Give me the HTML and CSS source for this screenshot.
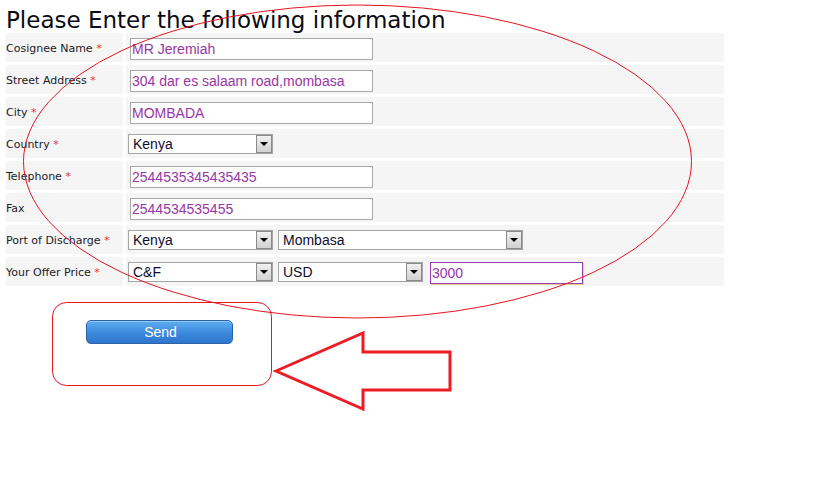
FILE: index.html
```html
<!DOCTYPE html>
<html lang="en">
<head>
    <meta charset="UTF-8" />
    <title>Shipping Request</title>
    <link rel="stylesheet" href="styles.css">
</head>
<body>

<div class="page">
    <h1 class="title">Please Enter the following information</h1>

    <table class="form-table">
        <tr>
            <td class="label">Cosignee Name <span class="req">*</span></td>
            <td class="field"><input type="text" class="text" value="MR Jeremiah"></td>
        </tr>
        <tr>
            <td class="label">Street Address <span class="req">*</span></td>
            <td class="field"><input type="text" class="text" value="304 dar es salaam road,mombasa"></td>
        </tr>
        <tr>
            <td class="label">City <span class="req">*</span></td>
            <td class="field"><input type="text" class="text" value="MOMBADA"></td>
        </tr>
        <tr>
            <td class="label">Country <span class="req">*</span></td>
            <td class="field">
                <span class="select"><select><option>Kenya</option></select></span>
            </td>
        </tr>
        <tr>
            <td class="label">Telephone <span class="req">*</span></td>
            <td class="field"><input type="text" class="text" value="2544535345435435"></td>
        </tr>
        <tr>
            <td class="label">Fax</td>
            <td class="field"><input type="text" class="text" value="2544534535455"></td>
        </tr>
        <tr>
            <td class="label">Port of Discharge <span class="req">*</span></td>
            <td class="field">
                <span class="select"><select><option>Kenya</option></select></span>
                <span class="select wide"><select><option>Mombasa</option></select></span>
            </td>
        </tr>
        <tr>
            <td class="label">Your Offer Price <span class="req">*</span></td>
            <td class="field">
                <span class="select"><select><option>C&amp;F</option></select></span>
                <span class="select"><select><option>USD</option></select></span>
                <input type="text" class="text price" value="3000">
            </td>
        </tr>
    </table>

    <div class="actions">
        <button class="send">Send</button>
    </div>
</div>

<!-- markup drawn on the screenshot -->
<svg class="marks" width="814" height="499" viewBox="0 0 814 499">
    <ellipse cx="357.5" cy="161.5" rx="334" ry="156.5" fill="none" stroke="#e8141e" stroke-width="1"/>
    <rect x="52.5" y="302.5" width="219" height="83" rx="14" fill="none" stroke="#e8141e" stroke-width="1"/>
    <polygon points="276,371 363,333 363,352 450,352 450,390 363,390 363,409" fill="none" stroke="#ed1c24" stroke-width="3"/>
</svg>

</body>
</html>
```

FILE: styles.css
```css
body {
    margin: 0;
    background: #fff;
    font-family: 'DejaVu Sans', Verdana, sans-serif;
    color: #1a1a2a;
}

.page {
    padding-left: 3px;
}

.title {
    margin: 11px 0 0 3px;
    line-height: 19px;
    font-size: 23px;
    font-weight: normal;
    color: #0a0a14;
}

.form-table {
    border-collapse: separate;
    border-spacing: 3px;
    width: 724px;
}

.form-table td {
    background: #f5f5f5;
    padding: 0;
    height: 29px;
    box-sizing: border-box;
}

.label {
    width: 117px;
    padding-top: 2px !important;
    font-size: 11px;
    vertical-align: middle;
    white-space: nowrap;
}

.req {
    color: #e8303a;
}

.field {
    padding: 5px 0 0 2px !important;
    vertical-align: top;
    font-size: 0;
}

.text {
    box-sizing: border-box;
    width: 243px;
    height: 22px;
    margin: 0 0 0 2px;
    padding: 0 1px;
    border: 1px solid #a9a9a9;
    background: #fff;
    font-family: 'Liberation Sans', Arial, sans-serif;
    font-size: 14px;
    color: #9a35a8;
    vertical-align: top;
}

.text.price {
    width: 153px;
    margin-left: 7px;
    border-color: #9b3fb8;
    box-shadow: 1px 1px 0 #e9d37c;
}

.select {
    display: inline-block;
    position: relative;
    width: 145px;
    height: 20px;
    vertical-align: top;
}

.select + .select {
    margin-left: 5px;
}

.select.wide {
    width: 245px;
}

.select select {
    box-sizing: border-box;
    width: 100%;
    height: 20px;
    margin: 0;
    padding: 0 0 0 4px;
    border: 1px solid #a5a5a5;
    border-radius: 0;
    background: #fff;
    appearance: none;
    -webkit-appearance: none;
    font-family: 'Liberation Sans', Arial, sans-serif;
    font-size: 14px;
    color: #0c0c30;
}

/* drop-down button */
.select::before {
    content: '';
    position: absolute;
    top: 1px;
    right: 1px;
    width: 14px;
    height: 16px;
    border: 1px solid #8a8a8a;
    background: linear-gradient(#f0f0f0, #d2d2d2);
    pointer-events: none;
}

.select::after {
    content: '';
    position: absolute;
    top: 8px;
    right: 5px;
    border-left: 4px solid transparent;
    border-right: 4px solid transparent;
    border-top: 4px solid #000;
    pointer-events: none;
}

.actions {
    padding: 31px 0 0 83px;
}

.send {
    width: 147px;
    height: 24px;
    padding: 0 0 0 2px;
    border: 1px solid #2c62a8;
    border-radius: 5px;
    background: linear-gradient(#5eaef0, #3a86da 60%, #2f76cc);
    box-shadow: inset 0 1px 0 rgba(255, 255, 255, 0.35), 0 1px 1px rgba(0, 0, 0, 0.15);
    font-family: 'Liberation Sans', Arial, sans-serif;
    font-size: 14px;
    color: #fff;
    cursor: pointer;
}

.marks {
    position: absolute;
    top: 0;
    left: 0;
    pointer-events: none;
}
```
